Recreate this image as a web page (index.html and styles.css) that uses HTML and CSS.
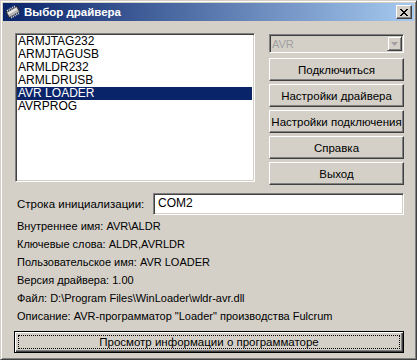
FILE: index.html
```html
<!DOCTYPE html>
<html lang="ru">
<head>
    <meta charset="UTF-8">
    <title>Выбор драйвера</title>
    <link rel="stylesheet" href="styles.css">
</head>
<body>

    <div class="window">
        <!-- Title bar -->
        <div class="titlebar">
            <svg class="title-icon" width="16" height="14" viewBox="0 0 16 14">
                <g transform="rotate(-30 8 7)">
                    <rect x="2" y="4" width="12" height="6" fill="#b8b8b8" stroke="#303030" stroke-width="1"/>
                    <rect x="3" y="5" width="10" height="2" fill="#e8e8e8"/>
                    <path d="M4 10v2M6 10v2M8 10v2M10 10v2M12 10v2" stroke="#e0e0e0" stroke-width="1"/>
                    <path d="M4 2v2M6 2v2M8 2v2M10 2v2M12 2v2" stroke="#e0e0e0" stroke-width="1"/>
                </g>
            </svg>
            <span class="title-text">Выбор драйвера</span>
            <button class="close-btn">
                <svg width="8" height="7" viewBox="0 0 8 7">
                    <path d="M0 0L7 7M1 0L8 7M7 0L0 7M8 0L1 7" stroke="#000" stroke-width="1"/>
                </svg>
            </button>
        </div>

        <div class="client">
            <div class="top-row">
                <ul class="listbox">
                    <li>ARMJTAG232</li>
                    <li>ARMJTAGUSB</li>
                    <li>ARMLDR232</li>
                    <li>ARMLDRUSB</li>
                    <li class="selected">AVR LOADER</li>
                    <li>AVRPROG</li>
                </ul>

                <div class="side">
                    <div class="combo">
                        <span>AVR</span>
                        <span class="combo-arrow">
                            <svg width="7" height="4" viewBox="0 0 7 4"><path d="M0 0h7L3.5 4z" fill="#a0a0a0"/></svg>
                        </span>
                    </div>
                    <button class="btn">Подключиться</button>
                    <button class="btn">Настройки драйвера</button>
                    <button class="btn">Настройки подключения</button>
                    <button class="btn">Справка</button>
                    <button class="btn">Выход</button>
                </div>
            </div>

            <div class="init-row">
                <span class="init-label">Строка инициализации:</span>
                <div class="edit">COM2</div>
            </div>

            <div class="info">
                <p>Внутреннее имя: AVR\ALDR</p>
                <p>Ключевые слова: ALDR,AVRLDR</p>
                <p>Пользовательское имя: AVR LOADER</p>
                <p>Версия драйвера: 1.00</p>
                <p>Файл: D:\Program Files\WinLoader\wldr-avr.dll</p>
                <p>Описание: AVR-программатор "Loader" производства Fulcrum</p>
            </div>

            <button class="btn btn-default"><span>Просмотр информации о программаторе</span></button>
        </div>
    </div>

</body>
</html>
```

FILE: styles.css
```css
/* Reset */
* { margin: 0; padding: 0; box-sizing: border-box; }
body { font-family: 'Liberation Sans', Arial, sans-serif; font-size: 11px; color: #000; background-color: #d4d0c8; }

/* Window frame */
.window { width: 417px; height: 360px; padding: 2px; background-color: #d4d0c8; border: 1px solid; border-color: #d4d0c8 #404040 #404040 #d4d0c8; box-shadow: inset 1px 1px 0 #fff, inset -1px -1px 0 #808080; }

/* Title bar */
.titlebar { display: flex; align-items: center; height: 18px; padding-left: 2px; padding-right: 2px; background: linear-gradient(to right, #0a246a, #a6caf0); }
.title-icon { flex: none; margin-right: 3px; }
.title-text { flex: 1; color: #fff; font-weight: bold; font-size: 11.5px; }
.close-btn { display: flex; align-items: center; justify-content: center; width: 16px; height: 14px; background-color: #d4d0c8; border: 1px solid; border-color: #fff #404040 #404040 #fff; box-shadow: inset -1px -1px 0 #808080; }

/* Client area */
.client { padding: 12px 10px 0 11px; }
.top-row { display: flex; gap: 14px; }

.listbox { list-style: none; width: 240px; height: 149px; margin-left: 1px; padding: 1px 0; font-size: 12px; background-color: #fff; border: 1px solid; border-color: #808080 #fff #fff #808080; box-shadow: inset 1px 1px 0 #404040, inset -1px -1px 0 #d4d0c8; }
.listbox li { height: 13px; line-height: 13px; padding-left: 1px; margin: 0 2px 0 1px; }
.listbox li.selected { background-color: #0a246a; color: #fff; }

.side { display: flex; flex-direction: column; width: 135px; }
.combo { display: flex; justify-content: space-between; align-items: center; height: 19px; margin-top: 1px; margin-bottom: 5px; padding-left: 2px; color: #a0a0a0; background-color: #d4d0c8; border: 1px solid; border-color: #808080 #fff #fff #808080; box-shadow: inset 1px 1px 0 #404040; }
.combo-arrow { display: flex; align-items: center; justify-content: center; width: 15px; height: 15px; margin-right: 1px; border: 1px solid; border-color: #d4d0c8 #404040 #404040 #d4d0c8; box-shadow: inset 1px 1px 0 #fff, inset -1px -1px 0 #808080; }

.btn { height: 23px; margin-bottom: 3px; padding: 0; white-space: nowrap; font-family: inherit; font-size: 11.5px; color: #000; background-color: #d4d0c8; border: 1px solid; border-color: #fff #404040 #404040 #fff; box-shadow: inset -1px -1px 0 #808080; }
.side .btn:last-child { margin-bottom: 0; }

/* Init string */
.init-row { display: flex; align-items: center; margin-top: 8px; height: 22px; font-size: 11.5px; }
.init-label { width: 139px; padding-left: 3px; }
.edit { flex: 1; height: 22px; line-height: 19px; padding-left: 4px; font-size: 12px; background-color: #fff; border: 1px solid; border-color: #808080 #fff #fff #808080; box-shadow: inset 1px 1px 0 #404040, inset -1px -1px 0 #d4d0c8; }

/* Info lines */
.info { margin-top: 2px; padding-left: 3px; font-size: 11px; }
.info p { height: 18px; line-height: 18px; }

/* Default button */
.btn-default { display: block; width: 390px; height: 22px; margin-top: 6px; padding: 3px; border: 1px solid #000; box-shadow: inset 1px 1px 0 #fff, inset -1px -1px 0 #404040, inset -2px -2px 0 #808080; }
.btn-default span { display: block; height: 14px; line-height: 12px; border: 1px dotted #000; }
```
